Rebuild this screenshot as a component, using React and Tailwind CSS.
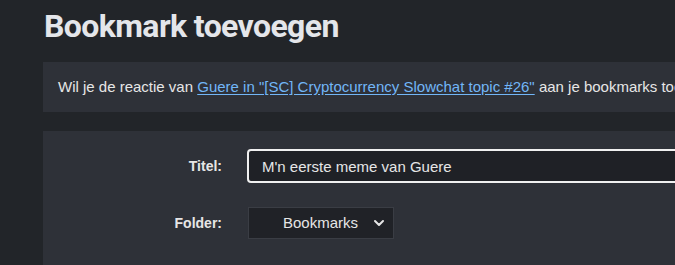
import { ChevronDown } from "lucide-react";

export default function App() {
  return (
    <div className="w-[675px] h-[265px] overflow-hidden bg-[#222529] font-['Liberation_Sans',Arial,sans-serif]">
      <div className="pl-[43px] w-[900px]">
        <h1 className="pl-[1px] pt-[4px] h-[62px] text-[32px] leading-[44px] font-bold tracking-[-0.6px] text-[#e4e6ea] font-['Roboto',sans-serif]">
          Bookmark toevoegen
        </h1>

        <div className="h-[50px] bg-[#2e3138] flex items-center pl-[15px] text-[15px] text-[#e6e6e6]">
          <p>
            Wil je de reactie van{" "}
            <a href="#" className="text-[#72b6f7] underline underline-offset-2">
              Guere in "[SC] Cryptocurrency Slowchat topic #26"
            </a>{" "}
            aan je bookmarks toevoegen?
          </p>
        </div>

        <div className="mt-[19px] h-[200px] bg-[#2e3138] pt-[18px]">
          <div className="flex items-center gap-[25px]">
            <label className="w-[179px] text-right text-[14px] font-bold text-[#e6e6e6]">
              Titel:
            </label>
            <input
              type="text"
              defaultValue="M'n eerste meme van Guere"
              spellCheck={false}
              className="w-[600px] h-[34px] rounded-[4px] border-2 border-[#f0f0f0] bg-[#1f2126] px-[13px] text-[15px] text-[#e6e6e6] outline-none"
            />
          </div>

          <div className="flex items-center gap-[26px] mt-[24px]">
            <label className="w-[179px] text-right text-[14px] font-bold text-[#e6e6e6]">
              Folder:
            </label>
            <div className="w-[146px] h-[32px] border border-[#3a3d44] bg-[#202227] flex items-center pl-[34px] pr-[6px] justify-between">
              <span className="text-[15px] text-[#e6e6e6]">Bookmarks</span>
              <ChevronDown size={16} strokeWidth={3} className="text-[#e6e6e6]" />
            </div>
          </div>
        </div>
      </div>
    </div>
  );
}
